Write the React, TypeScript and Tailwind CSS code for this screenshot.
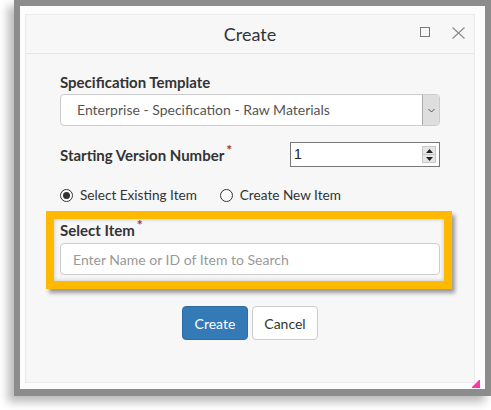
import React from "react";

const font = { fontFamily: "Lato, 'Noto Sans', sans-serif" };

function Radio({ checked, label }: { checked?: boolean; label: string }) {
  return (
    <label className="flex items-center gap-[7px]">
      <span className="flex h-[13px] w-[13px] items-center justify-center rounded-full border border-[#333] bg-white">
        {checked ? <span className="h-[7px] w-[7px] rounded-full bg-[#333]" /> : null}
      </span>
      <span className="text-[13.6px] leading-5 text-[#333]">{label}</span>
    </label>
  );
}

function Req() {
  return <span className="relative -top-[6px] ml-[2px] text-[14px] font-bold leading-none text-[#a8322a]">*</span>;
}

export default function App() {
  return (
    <div className="relative h-[410px] w-[491px] overflow-hidden bg-white" style={font}>
      {/* grey screenshot frame */}
      <div className="ml-[14px] h-[396px] w-[477px] bg-[#8c8c8c] p-[6px] shadow-[-6px_6px_9px_rgba(0,0,0,0.28)]">
        <div className="h-[383px] w-[465px] bg-[#fcfcfc] pb-[6px] pl-[5px] pr-[10px] pt-[8px]">
          <div className="relative flex h-[369px] w-[450px] flex-col border border-[#ebebeb] bg-[#f7f7f7]">
            {/* header */}
            <div className="relative flex h-[39px] items-center justify-center border-b border-[#e5e5e5]">
              <span className="text-[18px] text-[#333]">Create</span>
              <span className="absolute left-[394px] top-[12px] h-[10px] w-[10px] border-[1.5px] border-[#7a7a7a]" />
              <svg className="absolute left-[426px] top-[12px]" width="13" height="12" viewBox="0 0 13 12">
                <path d="M0.5 0.5 L12.5 11.5 M12.5 0.5 L0.5 11.5" stroke="#8a8a8a" strokeWidth="1.1" fill="none" />
              </svg>
            </div>

            {/* body */}
            <div className="flex flex-col px-[34px] pt-[19px]">
              <div className="text-[15px] font-bold leading-[18px] text-[#333]">Specification Template</div>
              <div className="mt-[3px] flex h-[32px] overflow-hidden rounded-[4px] border border-[#ccc] bg-white">
                <span className="flex-1 pl-[16px] text-[14px] leading-[30px] text-[#555]">
                  Enterprise - Specification - Raw Materials
                </span>
                <span className="flex w-[17px] items-center justify-center border-l border-[#aaa] bg-[#dedede]">
                  <svg width="7" height="5" viewBox="0 0 7 5">
                    <path d="M0.5 1 L3.5 4 L6.5 1" stroke="#555" strokeWidth="1" fill="none" />
                  </svg>
                </span>
              </div>

              <div className="mt-[16px] flex h-[25px] items-center justify-between">
                <div className="text-[15px] font-bold leading-[18px] text-[#333]">
                  Starting Version Number
                  <Req />
                </div>
                <div className="flex h-[25px] w-[150px] items-center justify-between border border-[#777] bg-white pl-[3px] pr-[3px]">
                  <span className="text-[14px] text-[#222]" style={{ fontFamily: "'Liberation Sans', Arial, sans-serif" }}>
                    1
                  </span>
                  <span className="flex h-[17px] w-[14px] flex-col border border-[#c8c8c8] bg-[#e6e6e6]">
                    <span className="flex flex-1 items-center justify-center border-b border-[#c8c8c8]">
                      <svg width="7" height="4" viewBox="0 0 7 4">
                        <path d="M0 4 L3.5 0 L7 4 Z" fill="#222" />
                      </svg>
                    </span>
                    <span className="flex flex-1 items-center justify-center">
                      <svg width="7" height="4" viewBox="0 0 7 4">
                        <path d="M0 0 L3.5 4 L7 0 Z" fill="#222" />
                      </svg>
                    </span>
                  </span>
                </div>
              </div>

              <div className="mt-[18px] flex h-5 items-center gap-[23px]">
                <Radio checked label="Select Existing Item" />
                <Radio label="Create New Item" />
              </div>

              {/* highlighted block */}
              <div className="-ml-[14px] -mr-[12px] mt-[6px] border-[8px] border-[#ffb900] pb-[6px] pl-[6px] pr-[4px] pt-[2px] shadow-[3px_4px_4px_rgba(0,0,0,0.38),inset_0_0_4px_rgba(0,0,0,0.22)]">
                <div className="h-[18px] text-[15px] font-bold leading-[18px] text-[#333]">
                  Select Item
                  <Req />
                </div>
                <div className="mt-[4px] flex h-[32px] items-center rounded-[4px] border border-[#ccc] bg-white pl-[12px] text-[14px] text-[#999]">
                  Enter Name or ID of Item to Search
                </div>
              </div>

              <div className="mt-[17px] flex justify-center gap-[4px]">
                <button className="h-[34px] w-[66px] rounded-[4px] border border-[#2e6da4] bg-[#337ab7] text-[14px] text-white">
                  Create
                </button>
                <button className="h-[34px] w-[66px] rounded-[4px] border border-[#ccc] bg-white text-[14px] text-[#333]">
                  Cancel
                </button>
              </div>
            </div>

            {/* resize grip */}
            <svg className="absolute bottom-[-6px] right-[-6px]" width="8" height="8" viewBox="0 0 8 8">
              <path d="M7 0 L8 0 L8 8 L0 8 L0 7 Z" fill="#ff1493" opacity="0.85" />
            </svg>
          </div>
        </div>
      </div>
    </div>
  );
}
